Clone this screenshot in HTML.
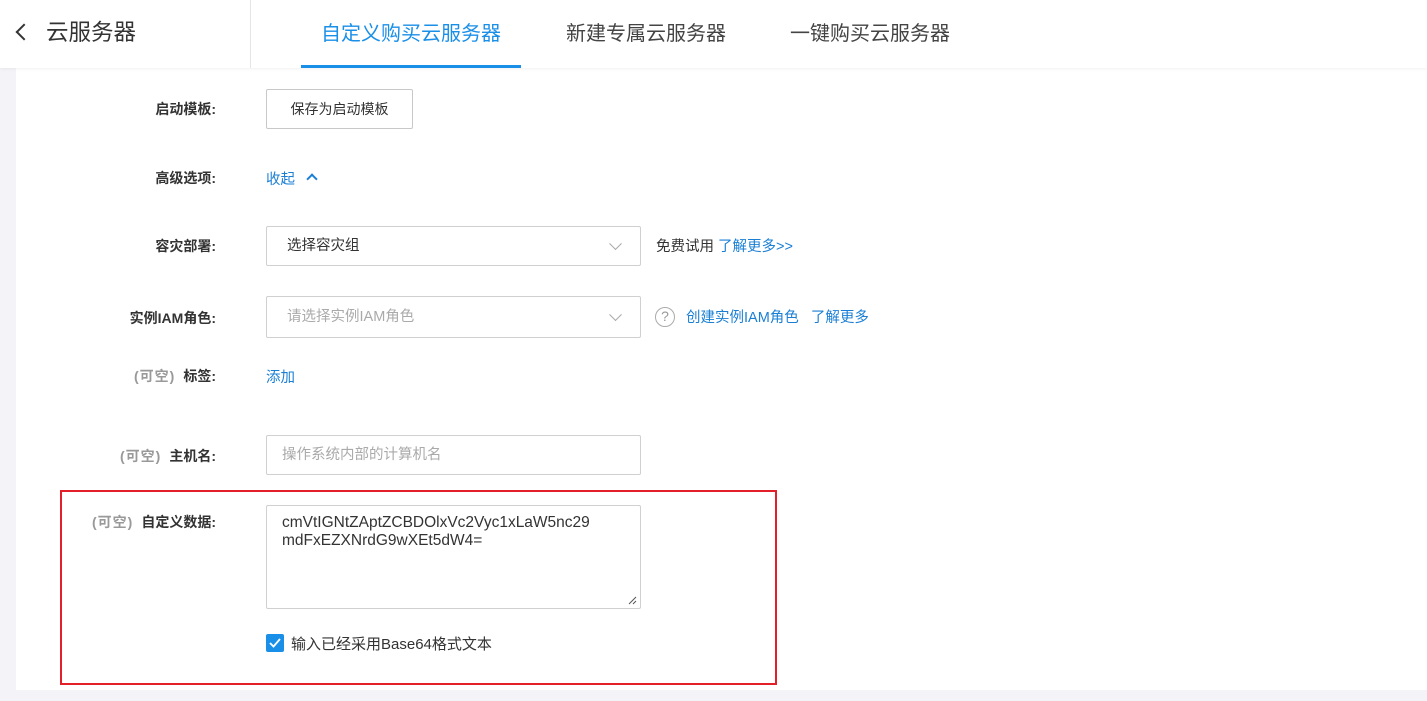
<!DOCTYPE html>
<html><head><meta charset="utf-8">
<style>
*{box-sizing:border-box;margin:0;padding:0}
body{width:1427px;height:701px;overflow:hidden;background:#f3f3f8;font-family:"Liberation Sans","Noto Sans CJK SC",sans-serif;color:#333;position:relative}
.hdr{position:absolute;left:0;top:0;width:1427px;height:68px;background:#fff;box-shadow:0 1px 3px rgba(0,0,0,.06);z-index:2}
.main{position:absolute;left:16px;top:68px;width:1411px;height:622px;background:#fff}
.a{position:absolute;white-space:nowrap}
.lbl{position:absolute;right:1211px;font-size:14px;font-weight:bold;color:#333;white-space:nowrap}
.lbl i{font-style:normal;color:#999;font-weight:bold;margin-right:8px;letter-spacing:1px}
.box{position:absolute;left:266px;width:375px;border:1px solid #d0d0d0;border-radius:2px;background:#fff;font-size:14px}
.blue{color:#1a7fd4}
.chev{position:absolute;right:20px;top:50%;width:9px;height:9px;border-right:1px solid #aaa;border-bottom:1px solid #aaa;transform:translateY(-75%) rotate(45deg)}
</style></head><body>
<div class="hdr">
 <div class="a" style="left:14px;top:23px;width:12px;height:12px;border-left:2px solid #333;border-bottom:2px solid #333;transform:translate(4px,3px) rotate(45deg)"></div>
 <div class="a" style="left:46px;top:15px;font-size:22.5px;color:#333">云服务器</div>
 <div class="a" style="left:250px;top:0;width:1px;height:68px;background:#e5e5e5"></div>
 <div class="a" style="left:321px;top:17px;font-size:20px;color:#1a8fe8">自定义购买云服务器</div>
 <div class="a" style="left:301px;top:65px;width:220px;height:3px;background:#1a8fe8"></div>
 <div class="a" style="left:566px;top:17px;font-size:20px;color:#444">新建专属云服务器</div>
 <div class="a" style="left:790px;top:17px;font-size:20px;color:#444">一键购买云服务器</div>
</div>
<div class="main"></div>

<div class="lbl" style="top:99px">启动模板:</div>
<div class="box" style="top:89px;width:147px;height:40px;text-align:center;line-height:38px;color:#333;border-color:#c8c8c8">保存为启动模板</div>

<div class="lbl" style="top:168px">高级选项:</div>
<div class="a blue" style="left:266px;top:168px;font-size:14.5px">收起</div>
<div class="a" style="left:308px;top:175px;width:8px;height:8px;border-left:2px solid #1a7fd4;border-top:2px solid #1a7fd4;transform:rotate(45deg)"></div>

<div class="lbl" style="top:236px">容灾部署:</div>
<div class="box" style="top:226px;height:40px;line-height:38px;padding-left:20px;color:#333;font-size:14.5px">选择容灾组<span class="chev"></span></div>
<div class="a" style="left:656px;top:235px;font-size:14.5px;color:#333">免费试用 <span class="blue">了解更多&gt;&gt;</span></div>

<div class="lbl" style="top:308px">实例IAM角色:</div>
<div class="box" style="top:296px;height:42px;line-height:40px;padding-left:20px;color:#aaa;font-size:14.5px">请选择实例IAM角色<span class="chev"></span></div>
<div class="a" style="left:655px;top:307px;width:20px;height:20px;border:1.5px solid #aaa;border-radius:50%;text-align:center;line-height:17px;font-size:14px;color:#999">?</div>
<div class="a blue" style="left:686px;top:306px;font-size:14.5px">创建实例IAM角色&nbsp;&nbsp;&nbsp;了解更多</div>

<div class="lbl" style="top:366px"><i>(可空)</i>标签:</div>
<div class="a blue" style="left:266px;top:366px;font-size:14.5px">添加</div>

<div class="lbl" style="top:446px"><i>(可空)</i>主机名:</div>
<div class="box" style="top:435px;height:40px;line-height:38px;padding-left:15px;color:#aaa;font-size:14.5px">操作系统内部的计算机名</div>

<div class="a" style="left:60px;top:490px;width:717px;height:195px;border:2px solid #e3202a"></div>
<div class="lbl" style="top:512px"><i>(可空)</i>自定义数据:</div>
<div class="box" style="top:505px;height:104px;padding:8px 15px;line-height:18px;color:#333;font-size:15.5px">cmVtIGNtZAptZCBDOlxVc2Vyc1xLaW5nc29<br>mdFxEZXNrdG9wXEt5dW4=
 <svg class="a" style="right:3px;bottom:3px" width="10" height="10"><path d="M9 2L2 9M9 6L6 9" stroke="#555" stroke-width="1"/></svg></div>
<div class="a" style="left:266px;top:634px;width:18px;height:18px;background:#1a8fe8;border-radius:2px"></div>
<svg class="a" style="left:266px;top:634px" width="18" height="18"><path d="M4 9l3.5 3.5L14 5" stroke="#fff" stroke-width="1.8" fill="none"/></svg>
<div class="a" style="left:291px;top:633px;font-size:15px;color:#333">输入已经采用Base64格式文本</div>
</body></html>
